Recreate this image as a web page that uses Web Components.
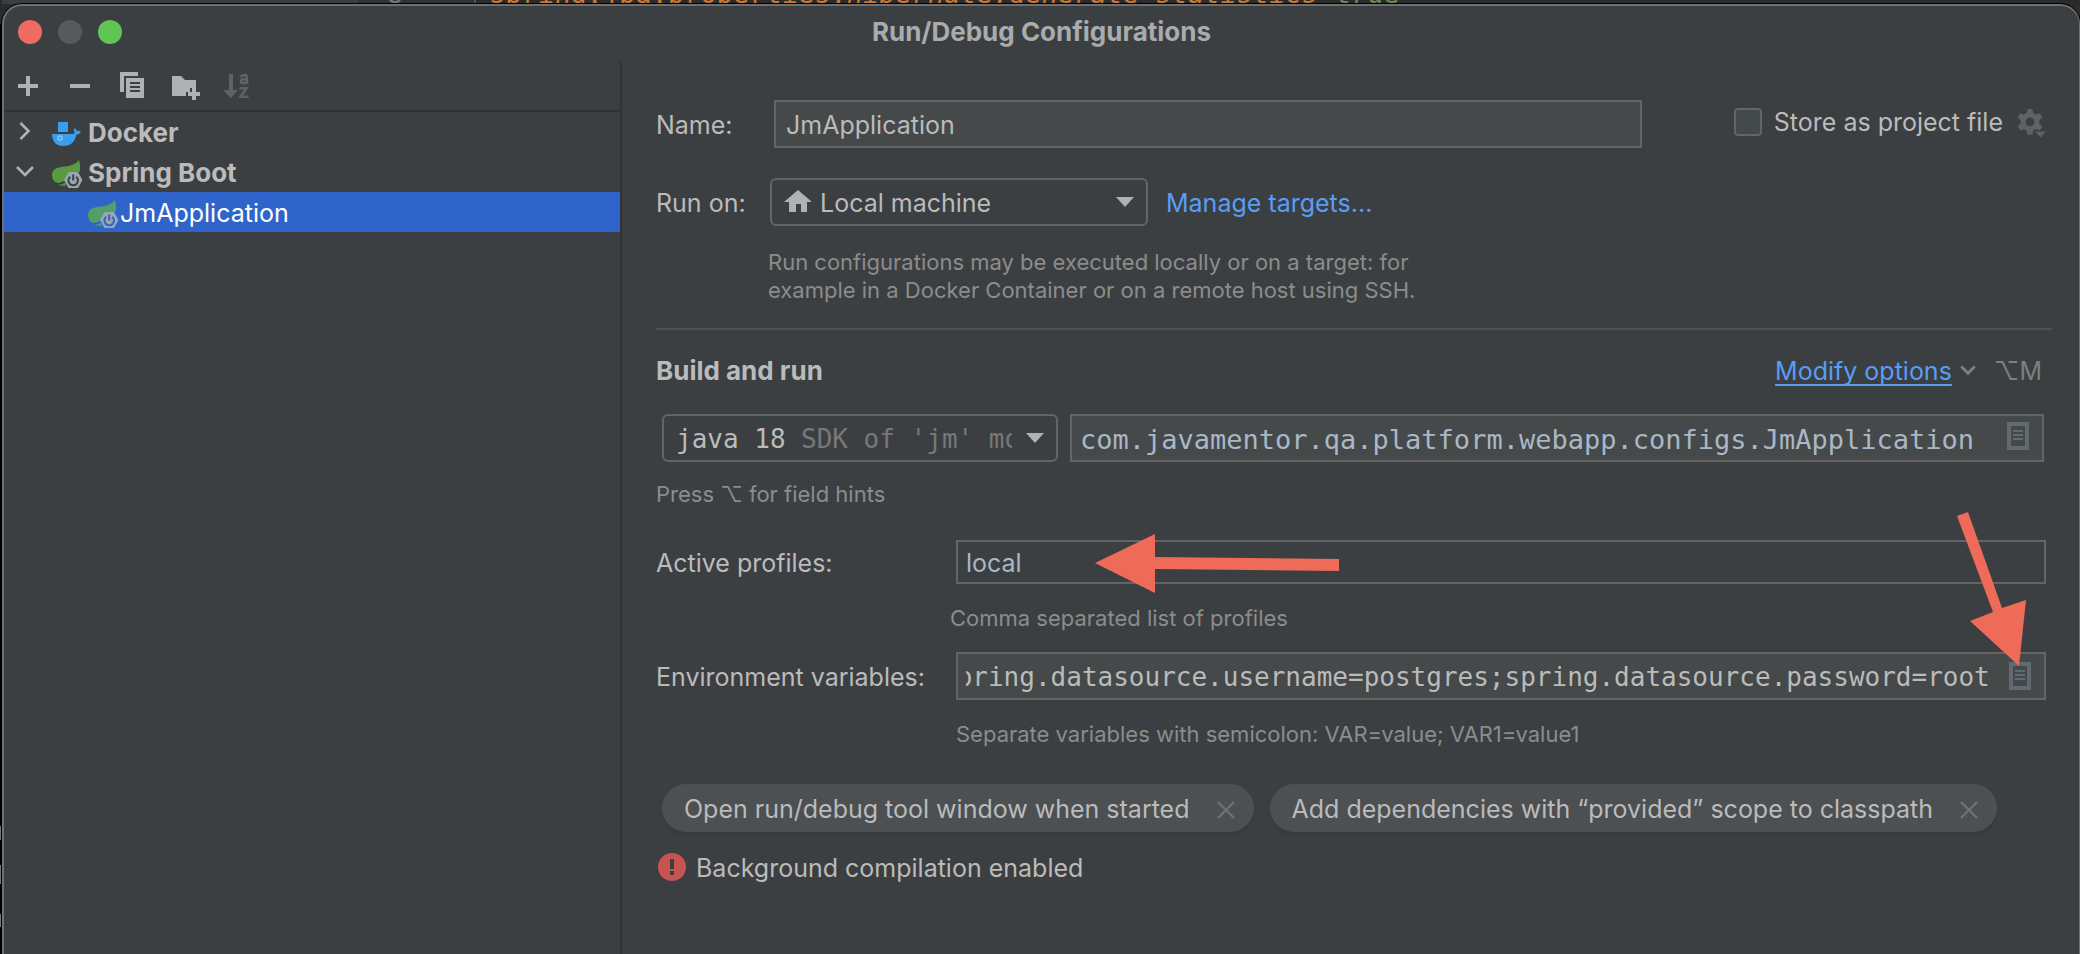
<!DOCTYPE html>
<html lang="en">
<head>
<meta charset="utf-8">
<title>Run/Debug Configurations</title>
<style>
  body {
    margin: 0;
    background: #2b2b2b;
    color: #bbbbbb;
    font: 25px/32px Inter, sans-serif;
    overflow: hidden;
    --panel: #3c3f41;
    --field: #45494a;
    --line: #646464;
    --hint: #8c8c8c;
    --link: #589df6;
    --code: #a9b7c6;
    --mono: "DejaVu Sans Mono", monospace;
  }
</style>
</head>
<body>
<ide-backdrop>
  <dialog-window>
    <span slot="title">Run/Debug Configurations</span>
    <config-sidebar slot="side">
      <tree-item icon="docker" label="Docker" state="closed"></tree-item>
      <tree-item icon="spring" label="Spring Boot" state="open"></tree-item>
      <tree-item icon="spring" label="JmApplication" state="leaf" selected></tree-item>
    </config-sidebar>
    <config-form></config-form>
  </dialog-window>
</ide-backdrop>

<script>
const ICONS = {
  add: '<path d="M14 6h4v8h8v4h-8v8h-4v-8H6v-4h8z" fill="#afb1b3"/>',
  remove: '<path d="M6 14h20v4H6z" fill="#afb1b3"/>',
  copy: '<path d="M4 2h18v4H8v16H4z" fill="#afb1b3"/><path fill-rule="evenodd" d="M10 8h18v20H10zm4 4v2h10v-2zm0 4v2h10v-2zm0 4v2h10v-2z" fill="#afb1b3"/>',
  folder: '<path d="M4 6h9l4 4h11v8h-6v4h-4v4H4z" fill="#afb1b3"/><path d="M24 18h4v4h4v4h-4v4h-4v-4h-4v-4h4z" fill="#afb1b3"/>',
  sort: '<path d="M9 4h4v16h5l-7 8-8-8h6z" fill="#5f6163"/><g fill="none" stroke="#5f6163" stroke-width="2.6"><path d="M20.500 7q2-2 4-2 2.500 0 2.500 3v6M27 9.200h-3q-3 0-3 2t2.500 2 3.500-2.500M19.500 18.300h7l-6 8.400h8"/></g>',
  chevronRight: '<path d="M10.500 7l8 8-8 8" fill="none" stroke="#afb1b3" stroke-width="2.6"/>',
  chevronDown: '<path d="M7 11l8 8 8-8" fill="none" stroke="#afb1b3" stroke-width="2.6"/>',
  docker: '<path d="M8 6h10v10H8zM2 18h20q3 0 2.500-2-1.500-2.500 0-4 2 1.500 2.500 3 2-.500 4 .5-1 2.500-4.500 3Q24 30 13 30 2.500 30 2 18z" fill="#389fee"/><circle cx="10" cy="22" r="2.200" fill="none" stroke="#bcdcf5" stroke-width="1"/>',
  spring: '<path d="M29 4q2 8 .500 12h-9l-6 9-6 2Q2 26 2 19q0-7 9-8 14-1 18-7z" fill="var(--leaf,#599b3f)"/><path d="M7 28.500q5 .8 8-2l1 3q-4 1-9-1z" fill="var(--leaf,#599b3f)"/><path d="M18.500 16h9.500l4.500 8-4.500 8h-9.500l-4.500-8z" fill="#9aa7b0"/><path d="M20.200 20.700a4.800 4.800 0 1 0 6 0M23.200 18.500v6" fill="none" stroke="var(--cut,#3c3f41)" stroke-width="2"/>',
  home: '<path d="M16 4l14 12h-5v10h-6v-8h-5v8H7V16H2z" fill="#afb1b3"/>',
  triangle: '<path d="M8 11h18l-9 10z" fill="#afb1b3"/>',
  gear: '<path fill-rule="evenodd" d="M12.500 3h5l.8 4 2.700 1.500 3.800-1.300 2.500 4.300-3 2.700v3.400l3 2.700-2.500 4.300-3.800-1.300-2.700 1.500-.8 4h-5l-.8-4L9 23.300l-3.800 1.300-2.500-4.300 3-2.700v-3.400l-3-2.700 2.500-4.300L9 8.500l2.700-1.500zM15 11.500a4.400 4.400 0 1 0 0 8.800 4.400 4.400 0 0 0 0-8.800z" fill="#5f6163"/><path d="M19 25h13l-6.500 7z" fill="#5f6163" stroke="#3c3f41" stroke-width="1"/>',
  expand: '<path fill-rule="evenodd" d="M5 2h22v28H5zm4 4v20h14V6z" fill="#606a70"/><path d="M11 10h10v2H11zm0 4h10v2H11zm0 4h10v2H11z" fill="#606a70"/>',
  close: '<path d="M8 9l16 16M24 9L8 25" fill="none" stroke="#6d7578" stroke-width="2"/>',
  caret: '<path d="M7 10l9 9 9-9" fill="none" stroke="#7b8284" stroke-width="4"/>',
  error: '<circle cx="16" cy="16" r="14" fill="#c75450"/><path d="M14 8h4v10h-4zM14 20h4v4h-4z" fill="#3c3f41"/>'
};

function define(tag, css, markup, ready) {
  const template = document.createElement('template');
  customElements.define(tag, class extends HTMLElement {
    constructor() {
      super();
      this.attachShadow({ mode: 'open' });
    }
    connectedCallback() {
      if (this.shadowRoot.childNodes.length) return;
      template.innerHTML = `<style>*{box-sizing:border-box}${css}</style>` +
        (typeof markup === 'function' ? markup(this) : markup);
      this.shadowRoot.append(template.content.cloneNode(true));
      if (ready) ready(this.shadowRoot);
    }
  });
}

define('ui-icon', `
  :host { display: block; flex: none; width: 32px; height: 32px; }
  svg { display: block; width: 100%; height: 100%; overflow: visible; }
`, el => `<svg viewBox="0 0 32 32" aria-hidden="true">${ICONS[el.getAttribute('name')]}</svg>`);

define('ide-backdrop', `
  :host { display: flex; flex-direction: column; height: 100vh; padding-left: 2px; box-sizing: border-box;
    background: linear-gradient(#777,#777) 0 826px/1px 14px no-repeat, linear-gradient(#777,#777) 0 865px/1px 19px no-repeat,
      linear-gradient(#777,#777) 0 914px/1px 13px no-repeat, linear-gradient(#000,#000) 0 24px/2px 100% no-repeat, #2b2b2b; }
  .code { display: flex; align-items: flex-end; height: 4px; flex: none; overflow: hidden;
    font: 27px/20px var(--mono); color: #cc7832; white-space: pre; }
  .gutter { flex: none; width: 474px; text-align: right; padding-right: 71px; height: 20px; color: #777;
    background: linear-gradient(90deg, #3c3f41 356px, #313335 356px); border-right: 2px solid #555; margin-right: 13px; }
  i { font-style: italic; }
  b { font-weight: 400; color: #6a8759; }
  ::slotted(*) { flex: 1; min-height: 0; }
`, `<div class="code"><span class="gutter">8</span><span>spring.jpa.properties.<i>hibernate.generate_statistics</i>=<b>true</b></span></div><slot></slot>`);

define('dialog-window', `
  :host { display: flex; flex-direction: column; background: var(--panel);
    border: 2px solid #6e7173; border-right-width: 1px; border-bottom: 0;
    border-radius: 20px 20px 0 0; box-shadow: 0 0 0 1px #000; overflow: hidden; box-sizing: border-box; }
  header { flex: none; display: grid; grid-template-columns: 1fr auto 1fr; align-items: center;
    height: 56px; padding: 0 14px 5px; }
  .lights { display: flex; gap: 16px; }
  .lights button { width: 24px; height: 24px; padding: 0; border: 0; border-radius: 50%; }
  .close { background: #ed6b60; } .min { background: #565a5b; } .max { background: #61c554; }
  h1 { margin: 0; font-size: 26px; line-height: 32px; color: #a9abac; }
  main { flex: 1; display: grid; grid-template-columns: 618px minmax(0, 1fr); min-height: 0; }
`, `<header><div class="lights"><button class="close" aria-label="Close"></button><button class="min" aria-label="Minimize"></button><button class="max" aria-label="Zoom"></button></div>
<h1><slot name="title"></slot></h1></header><main><slot name="side"></slot><slot></slot></main>`);

define('config-sidebar', `
  :host { display: block; border-right: 2px solid #323232; box-sizing: border-box; }
  nav { display: flex; align-items: center; gap: 20px; height: 50px; padding: 0 8px; border-bottom: 2px solid #323232; }
  button { padding: 0; border: 0; background: none; }
`, `<nav>${[['add', 'Add'], ['remove', 'Remove'], ['copy', 'Copy'], ['folder', 'New folder'], ['sort', 'Sort']]
  .map(([n, l]) => `<button aria-label="${l}"><ui-icon name="${n}"></ui-icon></button>`).join('')}</nav><slot></slot>`);

define('tree-item', `
  :host { display: flex; align-items: center; height: 40px; padding-left: 6px; font-size: 26px; font-weight: 700; }
  :host([selected]) { background: #2f65ca; color: #fff; font-size: 25px; font-weight: 400; --cut: #2f65ca; --leaf: #549e6a; }
  .twist { width: 32px; height: 32px; margin-right: 8px; }
  :host([state=leaf]) .twist { width: 68px; }
  .text { margin-left: 6px; padding-top: 2px; }
  :host([state=leaf]) .text { margin-left: 2px; }
`, el => {
  const s = el.getAttribute('state');
  return `<span class="twist">${s === 'leaf' ? '' : `<ui-icon name="${s === 'open' ? 'chevronDown' : 'chevronRight'}"></ui-icon>`}</span>
<ui-icon name="${el.getAttribute('icon')}"></ui-icon><span class="text">${el.getAttribute('label')}</span>`;
});

define('text-row', `
  :host { display: flex; align-items: center; position: relative; }
  label { flex: none; width: var(--label, 300px); padding-top: 2px; }
  label:empty { display: none; }
  .box { flex: 1; min-width: 0; display: flex; align-items: center; height: 48px; padding: 0 8px 0 10px;
    border: 2px solid var(--line); background: var(--field); }
  :host([kind]) .box { padding-left: 8px; }
  :host([kind=editor]) .box { height: 44px; background: var(--panel); }
  input { flex: 1; min-width: 0; width: 0; height: 40px; padding: 2px 0 0; border: 0; outline: 0; background: none; color: inherit; font: inherit; }
  :host([kind=editor]) input { color: var(--code); }
  :host([kind=class]) input { color: var(--code); font: 27px/38px var(--mono); }
  :host([kind=env]) input { font: 26px/38px var(--mono); }
  button { flex: none; margin-left: 14px; padding: 0; border: 0; background: none; }
  :host([kind=class]) button { margin-bottom: 4px; }
`, el => `<label for="f">${el.getAttribute('label') || ''}</label><span class="box">
<input id="f" value="${el.getAttribute('value')}" aria-label="${el.getAttribute('label') || 'Main class'}" spellcheck="false">
${el.hasAttribute('expandable') ? '<button aria-label="Expand"><ui-icon name="expand"></ui-icon></button>' : ''}</span><slot></slot>`,
root => {
  const input = root.querySelector('input');
  if (root.host.getAttribute('kind') === 'env') input.scrollLeft = input.scrollWidth;
});

define('combo-box', `
  :host { display: grid; align-items: center; }
  select, .lead, .suffix, .arrow { grid-area: 1 / 1; }
  select { width: 100%; height: 48px; margin: 0; padding: 2px 48px 0 12px; appearance: none; outline: 0;
    border: 2px solid var(--line); border-radius: 6px; background: var(--panel); color: inherit; font: inherit; }
  :host([icon]) select { padding-left: 48px; }
  :host([suffix]) select { font: 26px/32px var(--mono); }
  .lead { margin-left: 12px; pointer-events: none; }
  .suffix { margin: 0 46px 0 139px; padding-top: 2px; overflow: hidden; white-space: nowrap; pointer-events: none;
    color: #787878; font: 26px/32px var(--mono); }
  .arrow { justify-self: end; margin-right: 8px; pointer-events: none; }
`, el => `<select aria-label="${el.getAttribute('name')}"><option>${el.getAttribute('value')}</option></select>
${el.hasAttribute('icon') ? `<ui-icon class="lead" name="${el.getAttribute('icon')}"></ui-icon>` : ''}
${el.hasAttribute('suffix') ? `<span class="suffix">${el.getAttribute('suffix')}</span>` : ''}
<ui-icon class="arrow" name="triangle"></ui-icon>`);

define('option-chip', `
  :host { display: flex; align-items: center; height: 48px; padding: 2px 12px 0 22px; border-radius: 24px;
    background: #4c5052; box-shadow: 0 3px 2px #37393a; box-sizing: border-box; white-space: nowrap; }
  button { margin-left: 20px; padding: 0; border: 0; background: none; }
`, `<slot></slot><button aria-label="Remove option"><ui-icon name="close"></ui-icon></button>`);

define('pointer-arrow', `
  :host { position: absolute; pointer-events: none; }
  svg { display: block; }
`, el => el.getAttribute('to') === 'left'
  ? '<svg width="246" height="60" aria-hidden="true"><path d="M0 30L60 1v23l184 2v12l-184-2v24z" fill="#ed6b58"/></svg>'
  : '<svg width="70" height="156" aria-hidden="true"><path d="M1 5L12 1l34 96 24-8-7 66-49-45 23-9z" fill="#ed6b58"/></svg>');

define('config-form', `
  :host { display: block; padding: 38px 27px 0 34px; }
  a { color: var(--link); text-decoration: none; }
  .row { display: flex; align-items: center; }
  .name text-row { flex: 1; --label: 118px; }
  .store { display: flex; align-items: center; gap: 8px; margin: 0 5px 4px 92px; }
  .store label { display: flex; align-items: center; gap: 12px; padding-right: 4px; }
  .store input { appearance: none; width: 28px; height: 28px; margin: 0; border: 2px solid var(--line); border-radius: 4px; background: #43494a; }
  .store button { padding: 0; border: 0; background: none; }
  .target { margin-top: 30px; }
  .target > span { width: 114px; }
  .target > span, .target > a, .error > span { padding-top: 2px; }
  .target combo-box { width: 378px; margin-right: 18px; }
  .hint { margin: 20px 0; color: var(--hint); font-size: 22px; line-height: 28px; }
  .target-hint { margin: 22px 0 24px 112px; width: 680px; }
  hr { margin: 0; border: 0; height: 2px; background: #515151; }
  .head { margin-top: 25px; padding-right: 10px; }
  h2 { flex: 1; margin: 0; font-size: 26px; line-height: 32px; }
  .head a { text-decoration: underline; text-decoration-thickness: 2px; text-underline-offset: 4px; text-decoration-skip-ink: none; }
  .head ui-icon { width: 24px; height: 24px; margin: 0 14px 0 4px; }
  .keys { color: #7d7f80; }
  .launch { gap: 12px; margin: 27px 8px 0 6px; }
  .launch combo-box { width: 396px; }
  .launch text-row { flex: 1; }
  .press { margin: 18px 0 32px; }
  .params text-row { margin-right: 6px; }
  .profiles-hint { margin-left: 294px; }
  .env-hint { margin: 20px 0 36px 300px; }
  .chips { display: flex; gap: 16px; margin-left: 6px; }
  .error { gap: 8px; margin-top: 18px; }
  .to-profiles { left: 439px; top: -7px; }
  .to-env { right: 20px; top: -141px; }
`, `
<div class="row name"><text-row label="Name:" value="JmApplication"></text-row>
  <div class="store"><label><input type="checkbox">Store as project file</label><button aria-label="Storage settings"><ui-icon name="gear"></ui-icon></button></div></div>
<div class="row target"><span>Run on:</span><combo-box name="Run on" icon="home" value="Local machine"></combo-box><a href="#targets">Manage targets...</a></div>
<p class="hint target-hint">Run configurations may be executed locally or on a target: for<br>example in a Docker Container or on a remote host using SSH.</p>
<hr>
<div class="row head"><h2>Build and run</h2><a href="#options">Modify options</a><ui-icon name="caret"></ui-icon><span class="keys">⌥M</span></div>
<div class="row launch"><combo-box name="JRE" value="java 18" suffix="SDK of 'jm' module"></combo-box>
  <text-row kind="class" expandable value="com.javamentor.qa.platform.webapp.configs.JmApplication"></text-row></div>
<p class="hint press">Press ⌥ for field hints</p>
<div class="params">
  <text-row kind="editor" label="Active profiles:" value="local"><pointer-arrow class="to-profiles" to="left"></pointer-arrow></text-row>
  <p class="hint profiles-hint">Comma separated list of profiles</p>
  <text-row kind="env" expandable label="Environment variables:" value="spring.datasource.username=postgres;spring.datasource.password=root"><pointer-arrow class="to-env" to="down"></pointer-arrow></text-row>
  <p class="hint env-hint">Separate variables with semicolon: VAR=value; VAR1=value1</p>
</div>
<div class="chips"><option-chip>Open run/debug tool window when started</option-chip><option-chip>Add dependencies with “provided” scope to classpath</option-chip></div>
<div class="row error"><ui-icon name="error"></ui-icon><span>Background compilation enabled</span></div>
`);
</script>
</body>
</html>
